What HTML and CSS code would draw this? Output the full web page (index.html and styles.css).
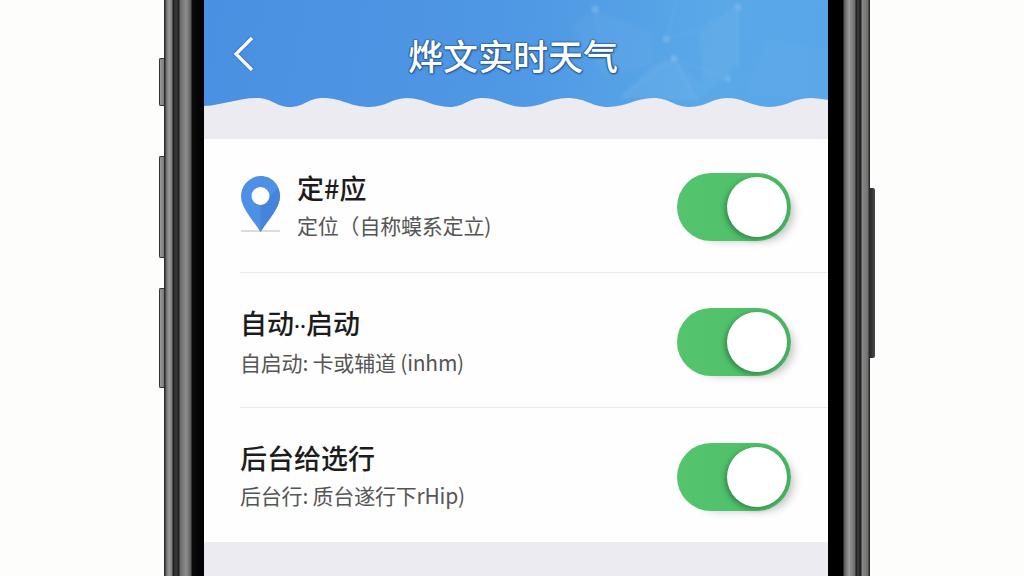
FILE: index.html
```html
<!DOCTYPE html>
<html lang="zh">
<head>
    <meta charset="UTF-8">
    <title>烨文实时天气</title>
    <link rel="stylesheet" href="styles.css">
</head>
<body>
<div class="phone">
    <div class="keys keys-left">
        <span class="key key-mute"></span>
        <span class="key key-up"></span>
        <span class="key key-down"></span>
    </div>
    <div class="bezel bezel-left"></div>

    <main class="screen">
        <header class="hero">
            <svg class="mesh" viewBox="0 0 624 139" aria-hidden="true">
                <g fill="#fff">
                    <polygon points="493,33 534,8 534,65 500,85" opacity="0.04"/>
                    <polygon points="416,98 449,65 470,58 493,100" opacity="0.06"/>
                    <polygon points="563,37 624,50 624,100 540,95" opacity="0.02"/>
                    <polygon points="366,27 391,9 449,33 449,65 399,77" opacity="0.03"/>
                    <polygon points="470,58 500,85 534,65 524,79 493,100" opacity="0.03"/>
                </g>
                <g fill="none" stroke="#9ccdf3" stroke-width="1" opacity="0.25">
                    <path d="M391 9 L395 34"/>
                    <path d="M534 7 L494 30 L462 39"/>
                    <path d="M462 39 L473 0"/>
                    <path d="M470 58 L524 79"/>
                    <path d="M470 58 L493 100"/>
                    <path d="M534 7 L534 67"/>
                    <path d="M470 58 L416 98"/>
                </g>
                <g fill="#8cc0ee" opacity="0.5">
                    <circle cx="391" cy="9" r="3.500"/>
                    <circle cx="534" cy="7" r="3.500"/>
                    <circle cx="462" cy="39" r="3.500"/>
                    <circle cx="470" cy="58" r="3.500"/>
                    <circle cx="524" cy="79" r="3"/>
                </g>
            </svg>
            <div class="topbar">
                <svg class="back" viewBox="0 0 24 38" aria-hidden="true">
                    <path d="M20 3 L4 19 L20 35" fill="none" stroke="#fff" stroke-width="3.200"/>
                </svg>
                <h1>烨文实时天气</h1>
            </div>
            <svg class="wave" viewBox="0 0 624 41" preserveAspectRatio="none" aria-hidden="true">
                <path fill="#ebebf1" d="M0 8 C20 7 34 0 53 0 C68 0 72 9 86 9 C100 9 104 0 119 0 C138 0 146 9 166 9 C182 9 188 0 203 0 C220 0 228 9 246 9 C260 9 264 0 279 0 C296 0 302 9 320 9 C338 9 346 0 363 0 C382 0 388 9 404 9 C422 9 432 0 449 0 C466 0 470 9 486 9 C502 9 508 0 523 0 C540 0 548 9 566 9 C582 9 590 0 606 0 C612 0 618 1 624 2 L624 41 L0 41 Z"/>
            </svg>
        </header>

        <section class="settings">
            <div class="row row-first">
                <div class="row-main">
                    <svg class="pin" viewBox="0 0 40 58" aria-hidden="true">
                        <rect x="0" y="54" width="39" height="2" fill="#dcdce0"/>
                        <path fill="#4d90e4" d="M20 0 C9 0 0 9 0 20 C0 32 12 44 19.500 56 C27 44 39 32 39 20 C39 9 31 0 20 0 Z"/>
                        <path fill="#4584da" d="M19.500 30 L19.500 56 C27 44 39 32 39 20 C39 17 38 14 37 12 Z"/>
                        <circle cx="19.500" cy="20" r="9" fill="#fff"/>
                    </svg>
                    <div>
                        <div class="row-title">定#应</div>
                        <div class="row-sub">定位（自称蟆系定立)</div>
                    </div>
                </div>
                <div class="toggle"><span class="knob"></span></div>
            </div>
            <div class="row row-mid">
                <div class="row-main">
                    <div>
                        <div class="row-title">自动<span class="dots">··</span>启动</div>
                        <div class="row-sub">自启动: 卡或辅道 (inhm)</div>
                    </div>
                </div>
                <div class="toggle"><span class="knob"></span></div>
            </div>
            <div class="row row-last">
                <div class="row-main">
                    <div>
                        <div class="row-title">后台给选行</div>
                        <div class="row-sub">后台行: 质台遂行下rHip)</div>
                    </div>
                </div>
                <div class="toggle"><span class="knob"></span></div>
            </div>
        </section>
        <div class="footer-band"></div>
    </main>

    <div class="bezel bezel-right"></div>
    <div class="keys keys-right">
        <span class="key key-power"></span>
    </div>
</div>
</body>
</html>
```

FILE: styles.css
```css
html, body {
    margin: 0;
    padding: 0;
    height: 576px;
    overflow: hidden;
    background-color: #fdfdfb;
    font-family: "Noto Sans CJK SC", "Noto Sans", sans-serif;
}

.phone {
    display: flex;
    height: 576px;
    padding-left: 159px;
}

/* side buttons */
.keys {
    display: flex;
    flex-direction: column;
    width: 5px;
}

.keys-left {
    padding-top: 58px;
}

.keys-right {
    width: 5px;
    padding-top: 188px;
}

.key {
    display: block;
    flex: none;
    box-sizing: border-box;
    border: 1px solid #333;
    border-right: none;
    background: linear-gradient(90deg, #9a9a9a 0%, #7a7a7a 100%);
    border-radius: 2px 0 0 2px;
}

.key-mute { height: 48px; }
.key-up { height: 102px; margin-top: 50px; }
.key-down { height: 100px; margin-top: 30px; }

.key-power {
    height: 170px;
    border: none;
    background: linear-gradient(90deg, #2a2a2a 0%, #4a4a4a 100%);
    border-radius: 0 2px 2px 0;
}

.bezel {
    height: 100%;
}

.bezel-left {
    width: 40px;
    background: linear-gradient(90deg,
        #2a2a2a 0, #2a2a2a 1px,
        #6a6a6a 2px, #9a9a9a 5px, #7c7c7c 8px,
        #1c1c1c 9px, #3a3a3a 12px, #1c1c1c 15px,
        #6a6a6a 16px, #8e8e8e 22px, #5c5c5c 27px,
        #0a0a0a 28px, #000 40px);
}

.bezel-right {
    width: 42px;
    background: linear-gradient(90deg,
        #000 0, #000 15px,
        #565656 16px, #9a9a9a 21px, #6a6a6a 27px,
        #1c1c1c 28px, #3a3a3a 30px, #1c1c1c 33px,
        #8a8a8a 34px, #707070 40px,
        #2a2a2a 41px, #2a2a2a 42px);
}

.screen {
    display: flex;
    flex-direction: column;
    width: 624px;
    height: 576px;
    background-color: #ebebf1;
}

/* blue header */
.hero {
    position: relative;
    flex: none;
    height: 139px;
    overflow: hidden;
    background: linear-gradient(100deg, #4a90e2 0%, #4f98e4 50%, #5aa8e8 80%, #58a6e8 100%);
}

.mesh {
    position: absolute;
    top: 0;
    left: 0;
    width: 624px;
    height: 139px;
    filter: blur(1.5px);
}

.topbar {
    position: relative;
    display: flex;
    align-items: center;
    height: 98px;
    padding: 10px 0 0 28px;
    box-sizing: border-box;
}

.back {
    flex: none;
    width: 24px;
    height: 38px;
    filter: drop-shadow(0 0 1px #2c5f9e);
}

.topbar h1 {
    margin: 0 0 0 152px;
    font-size: 35px;
    font-weight: 500;
    line-height: 1;
    color: #fff;
    text-shadow: 1px 0 1px #2f5f98, -1px 0 1px #2f5f98, 0 1px 1px #2f5f98, 0 -1px 1px #3f74b0, 1px 1px 2px #2a5590;
}

.wave {
    position: relative;
    display: block;
    width: 624px;
    height: 41px;
}

/* settings list */
.settings {
    flex: none;
    height: 403px;
    background-color: #fefefe;
}

.row {
    display: flex;
    align-items: center;
    justify-content: space-between;
    margin-left: 36px;
    padding-right: 37px;
    border-bottom: 1px solid #e8e8ea;
    box-sizing: border-box;
}

.row-first {
    height: 134px;
    padding-top: 2px;
}

.row-mid {
    height: 135px;
    padding-top: 4px;
}

.row-last {
    height: 134px;
    padding-top: 3px;
    border-bottom: none;
}

.row-main {
    display: flex;
    align-items: center;
    gap: 16px;
}

.pin {
    display: block;
    flex: none;
    width: 40px;
    height: 58px;
    margin: 0 0 4px 1px;
}

.row-title {
    font-size: 27px;
    font-weight: 500;
    line-height: 36px;
    color: #1c1c1c;
}

.dots {
    font-family: "Noto Sans", sans-serif;
    font-size: 22px;
}

.row-sub {
    margin-top: 1px;
    font-size: 21px;
    line-height: 36px;
    letter-spacing: -0.2px;
    color: #555;
}

.toggle {
    display: flex;
    align-items: center;
    justify-content: flex-end;
    width: 114px;
    height: 68px;
    padding-right: 4px;
    box-sizing: border-box;
    border-radius: 34px;
    background: linear-gradient(90deg, #54c56e 0%, #50c06a 60%, #48b562 100%);
    box-shadow: 8px 5px 8px -5px rgba(0, 0, 0, 0.22);
}

.knob {
    display: block;
    width: 60px;
    height: 60px;
    border-radius: 50%;
    background-color: #fff;
    box-shadow: -2px 2px 5px rgba(20, 80, 40, 0.5);
}

.footer-band {
    flex: 1;
    background-color: #ebebf1;
}
```
